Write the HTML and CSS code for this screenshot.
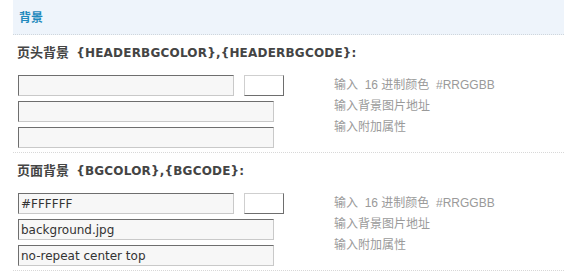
FILE: index.html
```html
<!DOCTYPE html>
<html>
	<head>
		<title>背景设置</title>
		<meta charset="utf-8">
		<link rel="stylesheet" href="styles.css">
	</head>
	<body>
		<div class="panel">
			<div class="panel-title">背景</div>

			<div class="section">
				<div class="label"><span class="label-cn">页头背景</span> <span class="label-code">{HEADERBGCOLOR},{HEADERBGCODE}:</span></div>
				<div class="fields">
					<div class="inputs">
						<div class="input-row">
							<input class="txt txt-color" type="text" value="">
							<input class="swatch" type="text" value="">
						</div>
						<input class="txt txt-wide" type="text" value="">
						<input class="txt txt-wide" type="text" value="">
					</div>
					<div class="help">
						<div>输入&nbsp; 16 进制颜色&nbsp; #RRGGBB</div>
						<div>输入背景图片地址</div>
						<div>输入附加属性</div>
					</div>
				</div>
			</div>

			<div class="section">
				<div class="label"><span class="label-cn">页面背景</span> <span class="label-code">{BGCOLOR},{BGCODE}:</span></div>
				<div class="fields">
					<div class="inputs">
						<div class="input-row">
							<input class="txt txt-color" type="text" value="#FFFFFF">
							<input class="swatch" type="text" value="">
						</div>
						<input class="txt txt-wide" type="text" value="background.jpg">
						<input class="txt txt-wide" type="text" value="no-repeat center top">
					</div>
					<div class="help">
						<div>输入&nbsp; 16 进制颜色&nbsp; #RRGGBB</div>
						<div>输入背景图片地址</div>
						<div>输入附加属性</div>
					</div>
				</div>
			</div>
		</div>
	</body>
</html>
```

FILE: styles.css
```css
html, body {
    margin: 0;
    padding: 0;
    background: #fff;
}

body {
    font-family: "DejaVu Sans", "Noto Sans CJK SC", sans-serif;
    font-size: 12px;
    color: #333;
}

.panel {
    margin-left: 13px;
}

.panel-title {
    height: 34px;
    line-height: 33px;
    padding-left: 6px;
    background: #eef4fb;
    border-bottom: 1px dotted #cfd6dc;
    color: #1f8abd;
    font-family: "Noto Sans CJK SC", sans-serif;
    font-weight: bold;
    font-size: 12px;
}

.section {
    padding: 8px 0 4px 5px;
    border-bottom: 1px dotted #d8d8d8;
}

.label {
    height: 18px;
    line-height: 18px;
    margin-left: -1px;
    margin-bottom: 14px;
    color: #444;
    font-weight: bold;
    white-space: nowrap;
}

.label-cn {
    font-family: "Noto Sans CJK SC", sans-serif;
    font-size: 13px;
}

.label-code {
    font-family: "DejaVu Sans", sans-serif;
    font-size: 12px;
    letter-spacing: 0.2px;
    margin-left: 3px;
}

.fields {
    display: flex;
    align-items: flex-start;
}

.inputs {
    display: flex;
    flex-direction: column;
    align-items: flex-start;
    gap: 5px;
    flex: none;
}

.input-row {
    display: flex;
    gap: 10px;
}

.txt, .swatch {
    box-sizing: border-box;
    flex: none;
    height: 21px;
    margin: 0;
    padding: 0 2px;
    font-family: "DejaVu Sans", sans-serif;
    font-size: 12px;
    color: #333;
    outline: none;
}

.txt {
    background: #f7f7f7;
    border: 1px solid #c9c9c9;
    border-top-color: #6e6e6e;
    border-left-color: #6e6e6e;
}

.txt-color {
    width: 216px;
}

.txt-wide {
    width: 256px;
}

.swatch {
    width: 40px;
    background: #fff;
    border: 1px solid #cfcfcf;
    border-right-color: #6e6e6e;
    border-bottom-color: #6e6e6e;
}

.help {
    margin-left: 50px;
    font-family: "Liberation Sans", "Noto Sans CJK SC", sans-serif;
    font-size: 12px;
    line-height: 21px;
    color: #9a9a9a;
    white-space: nowrap;
}
```
